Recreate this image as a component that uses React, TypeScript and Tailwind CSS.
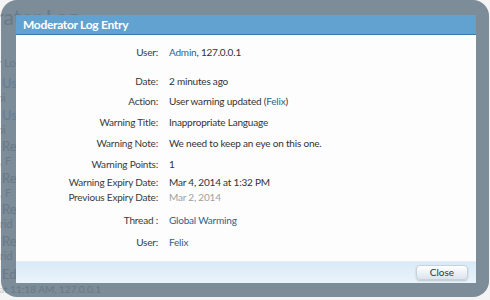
import React from 'react';

type Row = { label: string; value: React.ReactNode; cls: string };

const link = 'text-[#2b6291]';

const rows: Row[] = [
  { label: 'User:', value: <><span className={link}>Admin</span>, 127.0.0.1</>, cls: 'h-[20px] mt-0' },
  { label: 'Date:', value: '2 minutes ago', cls: 'h-[20px] mt-[9px]' },
  { label: 'Action:', value: <>User warning updated (<span className={link}>Felix</span>)</>, cls: 'h-[20px] mt-0' },
  { label: 'Warning Title:', value: 'Inappropriate Language', cls: 'h-[20px] mt-[1px]' },
  { label: 'Warning Note:', value: 'We need to keep an eye on this one.', cls: 'h-[20px] mt-[1px]' },
  { label: 'Warning Points:', value: '1', cls: 'h-[20px] mt-[1px]' },
  { label: 'Warning Expiry Date:', value: 'Mar 4, 2014 at 1:32 PM', cls: 'h-[15px] mt-[1px]' },
  { label: 'Previous Expiry Date:', value: <span className="text-[#a0a0a0]">Mar 2, 2014</span>, cls: 'h-[15px] mt-0' },
  { label: 'Thread :', value: <span className={link}>Global Warming</span>, cls: 'h-[20px] mt-[5px]' },
  { label: 'User:', value: <span className={link}>Felix</span>, cls: 'h-[20px] mt-[2px]' },
];

// faint page behind the overlay
function PageBehind() {
  const items = [
    ['Use', 'mi'],
    ['Use', 'mi'],
    ['Res', 'e, F'],
    ['Res', 'e, F'],
    ['Res', 'Frid'],
    ['Res', 'Frid'],
  ];
  return (
    <div className="flex flex-col text-[#c8c8c8]">
      <div className="-ml-[58px] mt-[2px] h-[42px] whitespace-nowrap text-[21px] leading-[30px]">Moderator Log</div>
      <div className="-ml-[50px] mt-[12px] whitespace-nowrap text-[11px] leading-[14px]">Moderator Log</div>
      <div className="mt-[4px] flex flex-col">
        {items.map(([a, b], i) => (
          <div key={i} className="flex h-[31.5px] flex-col pl-[2px]">
            <span className={`text-[13px] leading-[18px] ${i < 2 ? 'text-[#b9d3ea]' : ''}`}>{a}</span>
            <span className="-ml-[8px] text-[11px] leading-[12px]">{b}</span>
          </div>
        ))}
        <div className="mt-[3px] pl-[2px] text-[13px] leading-[16px]">Edit</div>
        <div className="-ml-[30px] whitespace-nowrap text-[10px] leading-[14px]">Friday at 11:18 AM, 127.0.0.1</div>
      </div>
    </div>
  );
}

export default function App() {
  return (
    <div
      className="relative h-[300px] w-[490px] overflow-hidden bg-[#f4f4f4]"
      style={{ fontFamily: 'Lato, "Open Sans", Arial, sans-serif' }}
    >
      <PageBehind />

      {/* overlay frame */}
      <div className="absolute left-[1px] top-0 h-[297px] w-[488px] rounded-[16px] bg-[#2c465c]/60 pb-[14px] pl-[15px] pr-[13px] pt-[15px]">
        <div className="flex h-full flex-col overflow-hidden bg-white">
          <div className="flex h-[20px] shrink-0 items-center border-b border-[#3c78a6] bg-[#62a2d0] pl-[7px] text-[12px] font-bold tracking-[-0.3px] text-white">
            Moderator Log Entry
          </div>

          <div className="flex flex-1 flex-col bg-[#fdfdfe] pt-[7px] text-[10px] tracking-[-0.2px] text-[#333]">
            {rows.map((r, i) => (
              <div key={i} className={`grid grid-cols-[142px_1fr] items-center gap-x-[11px] ${r.cls}`}>
                <div className="text-right text-[#3a3a3a]">{r.label}</div>
                <div>{r.value}</div>
              </div>
            ))}
          </div>

          <div className="flex h-[22px] shrink-0 items-center justify-end border-t border-[#e4eef6] bg-gradient-to-b from-[#d9eaf7] to-[#eaf4fb] pr-[8px]">
            <button
              type="button"
              className="h-[15px] w-[52px] rounded-[4px] border border-[#c6d2dc] bg-gradient-to-b from-[#ffffff] to-[#dbe5ee] text-[10px] leading-[13px] text-[#333] shadow-[0_1px_2px_rgba(0,0,0,0.2)]"
            >
              Close
            </button>
          </div>
        </div>
      </div>
    </div>
  );
}
